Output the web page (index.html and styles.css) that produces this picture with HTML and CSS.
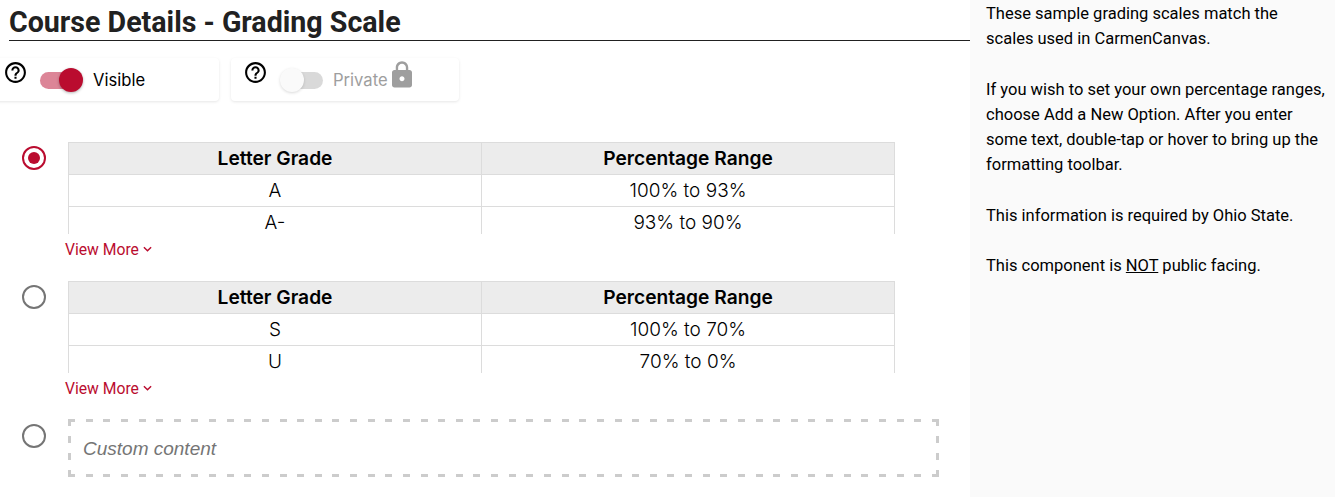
FILE: index.html
```html
<!DOCTYPE html>
<html lang="en">
<head>
  <meta charset="UTF-8">
  <title>Course Details - Grading Scale</title>
  <link rel="stylesheet" href="styles.css">
</head>
<body>
  <div class="page">
    <main class="main">
      <h1 class="title">Course Details - Grading Scale</h1>

      <div class="switches">
        <div class="switch-card visible-card">
          <svg class="help" viewBox="0 0 24 24"><path d="M11 18h2v-2h-2v2zm1-16C6.48 2 2 6.48 2 12s4.48 10 10 10 10-4.48 10-10S17.52 2 12 2zm0 18c-4.41 0-8-3.59-8-8s3.59-8 8-8 8 3.59 8 8-3.59 8-8 8zm0-14c-2.21 0-4 1.79-4 4h2c0-1.1.9-2 2-2s2 .9 2 2c0 2-3 1.75-3 5h2c0-2.25 3-2.5 3-5 0-2.21-1.79-4-4-4z"/></svg>
          <span class="switch on"><span class="track"></span><span class="thumb"></span></span>
          <span class="switch-label">Visible</span>
        </div>
        <div class="switch-card private-card">
          <svg class="help" viewBox="0 0 24 24"><path d="M11 18h2v-2h-2v2zm1-16C6.48 2 2 6.48 2 12s4.48 10 10 10 10-4.48 10-10S17.52 2 12 2zm0 18c-4.41 0-8-3.59-8-8s3.59-8 8-8 8 3.59 8 8-3.59 8-8 8zm0-14c-2.21 0-4 1.79-4 4h2c0-1.1.9-2 2-2s2 .9 2 2c0 2-3 1.75-3 5h2c0-2.25 3-2.5 3-5 0-2.21-1.79-4-4-4z"/></svg>
          <span class="switch off"><span class="track"></span><span class="thumb"></span></span>
          <span class="switch-label muted">Private</span>
          <svg class="lock" viewBox="0 0 24 24"><path d="M18 8h-1V6c0-2.76-2.24-5-5-5S7 3.24 7 6v2H6c-1.1 0-2 .9-2 2v10c0 1.1.9 2 2 2h12c1.1 0 2-.9 2-2V10c0-1.1-.9-2-2-2zm-6 9c-1.1 0-2-.9-2-2s.9-2 2-2 2 .9 2 2-.9 2-2 2zm3.1-9H8.9V6c0-1.71 1.39-3.1 3.1-3.1 1.71 0 3.1 1.39 3.1 3.1v2z"/></svg>
        </div>
      </div>

      <div class="option first">
        <span class="radio checked"></span>
        <div class="option-body">
          <div class="table-clip">
            <table class="scale">
              <tr><th>Letter Grade</th><th>Percentage Range</th></tr>
              <tr><td>A</td><td>100% to 93%</td></tr>
              <tr><td>A-</td><td>93% to 90%</td></tr>
            </table>
          </div>
          <a class="view-more">View More
            <svg class="chev" viewBox="0 0 10 6"><path d="M1 1l4 4 4-4"/></svg>
          </a>
        </div>
      </div>

      <div class="option">
        <span class="radio"></span>
        <div class="option-body">
          <div class="table-clip">
            <table class="scale">
              <tr><th>Letter Grade</th><th>Percentage Range</th></tr>
              <tr><td>S</td><td>100% to 70%</td></tr>
              <tr><td>U</td><td>70% to 0%</td></tr>
            </table>
          </div>
          <a class="view-more">View More
            <svg class="chev" viewBox="0 0 10 6"><path d="M1 1l4 4 4-4"/></svg>
          </a>
        </div>
      </div>

      <div class="option custom">
        <span class="radio"></span>
        <div class="custom-box">Custom content</div>
      </div>
    </main>

    <aside class="side">
      <p>These sample grading scales match the scales used in CarmenCanvas.</p>
      <p>If you wish to set your own percentage ranges, choose Add a New Option. After you enter some text, double-tap or hover to bring up the formatting toolbar.</p>
      <p>This information is required by Ohio State.</p>
      <p>This component is <u>NOT</u> public facing.</p>
    </aside>
  </div>
</body>
</html>
```

FILE: styles.css
```css
html, body {
  margin: 0;
  height: 100%;
  overflow: hidden;
}
body {
  font-family: Roboto, "Liberation Sans", sans-serif;
  color: #212121;
  background: #fff;
}
.page {
  display: flex;
  height: 497px;
}
.main {
  width: 970px;
  flex: none;
}
.title {
  margin: 0 0 0 9px;
  height: 40px;
  border-bottom: 1px solid #212121;
  font-size: 28.6px;
  font-weight: 700;
  line-height: 45px;
}
.switches {
  display: flex;
  gap: 12px;
  margin-top: 17px;
  margin-left: -10px;
}
.switch-card {
  display: flex;
  align-items: center;
  height: 43px;
  border-radius: 4px;
  box-shadow: 0 1px 3px rgba(0,0,0,0.1);
  position: relative;
}
.visible-card {
  width: 229px;
}
.private-card {
  width: 228px;
}
.help {
  position: absolute;
  width: 25px;
  height: 25px;
  top: 2px;
  left: 13px;
}
.private-card .help {
  left: 12px;
}
.switch {
  position: relative;
  display: block;
  width: 39px;
  height: 17px;
  margin-top: 1px;
}
.visible-card .switch {
  margin-left: 50px;
}
.private-card .switch {
  margin-left: 53px;
}
.track {
  display: block;
  height: 17px;
  border-radius: 9px;
  background: #ba0c2f;
  opacity: 0.5;
}
.off .track {
  background: #000;
  opacity: 0.15;
}
.thumb {
  position: absolute;
  top: -4px;
  left: 19px;
  width: 24px;
  height: 24px;
  border-radius: 50%;
  background: #ba0c2f;
  box-shadow: 0 1px 3px rgba(0,0,0,0.3);
}
.off .thumb {
  left: -4px;
  background: #fafafa;
  box-shadow: 0 1px 3px rgba(0,0,0,0.15);
}
.switch-label {
  margin-left: 14px;
  font-family: Inter, Roboto, sans-serif;
  font-size: 16.6px;
  color: #000;
}
.private-card .switch-label {
  margin-left: 10px;
  color: #9e9e9e;
}
.lock {
  width: 30px;
  height: 30px;
  fill: #9e9e9e;
  margin-top: -9px;
  margin-left: -1px;
}
.option {
  display: flex;
  margin-top: 8px;
}
.option.first {
  margin-top: 41px;
}
.radio {
  flex: none;
  box-sizing: border-box;
  width: 24px;
  height: 24px;
  margin: 4px 22px 0 22px;
  border: 2px solid #757575;
  border-radius: 50%;
  position: relative;
}
.radio.checked {
  border-color: #ba0c2f;
}
.radio.checked::after {
  content: "";
  position: absolute;
  top: 4px;
  left: 4px;
  width: 12px;
  height: 12px;
  border-radius: 50%;
  background: #ba0c2f;
}
.table-clip {
  width: 827px;
  height: 92px;
  overflow: hidden;
}
.scale {
  width: 100%;
  table-layout: fixed;
  border-collapse: collapse;
  font-family: Inter, Roboto, sans-serif;
  color: #000;
}
.scale th, .scale td {
  border: 1px solid #dcdcdc;
  height: 31px;
  padding: 0;
  text-align: center;
  font-size: 19px;
  line-height: 31px;
}
.scale th {
  background: #ececec;
  font-weight: 600;
  font-size: 19.2px;
}
.scale td {
  font-weight: 300;
}
.view-more {
  display: block;
  margin: 6px 0 0 -3px;
  height: 33px;
  line-height: 20px;
  font-size: 15.7px;
  color: #ba0c2f;
}
.chev {
  width: 9px;
  height: 6px;
  vertical-align: 3px;
  fill: none;
  stroke: #ba0c2f;
  stroke-width: 1.6;
}
.custom {
  margin-top: 7px;
}
.custom .radio {
  margin-top: 5px;
}
.custom-box {
  box-sizing: border-box;
  width: 871px;
  height: 58px;
  padding-left: 15px;
  font-family: "Liberation Sans", Arial, sans-serif;
  font-style: italic;
  font-size: 19px;
  line-height: 59px;
  color: #757575;
  background:
    repeating-linear-gradient(90deg, #ccc 0 7px, transparent 7px 17.63px) top / 100% 3px no-repeat,
    repeating-linear-gradient(90deg, #ccc 0 7px, transparent 7px 17.63px) bottom / 100% 3px no-repeat,
    repeating-linear-gradient(180deg, #ccc 0 7px, transparent 7px 17px) left / 3px 100% no-repeat,
    repeating-linear-gradient(180deg, #ccc 0 7px, transparent 7px 17px) right / 3px 100% no-repeat;
}
.side {
  flex: 1;
  background: #fafafa;
  padding: 1px 0 0 16px;
  font-size: 16.5px;
  line-height: 25.2px;
  color: #000;
}
.side p {
  margin: 0 0 25.2px;
  max-width: 342px;
}
```
